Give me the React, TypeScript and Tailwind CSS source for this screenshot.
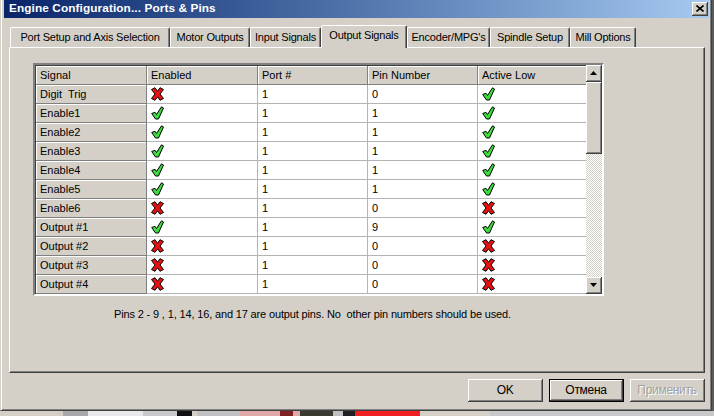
import React from 'react';

type Row = [string, boolean, string, string, boolean];

const rows: Row[] = [
    ['Digit  Trig', false, '1', '0', true],
    ['Enable1', true, '1', '1', true],
    ['Enable2', true, '1', '1', true],
    ['Enable3', true, '1', '1', true],
    ['Enable4', true, '1', '1', true],
    ['Enable5', true, '1', '1', true],
    ['Enable6', false, '1', '0', false],
    ['Output #1', true, '1', '9', true],
    ['Output #2', false, '1', '0', false],
    ['Output #3', false, '1', '0', false],
    ['Output #4', false, '1', '0', false],
];

const tabs = [
    { label: 'Port Setup and Axis Selection', w: 'w-[160px]' },
    { label: 'Motor Outputs', w: 'w-[80px]' },
    { label: 'Input Signals', w: 'w-[71px]' },
    { label: 'Output Signals', w: 'w-[86px]', active: true },
    { label: "Encoder/MPG's", w: 'w-[83px]' },
    { label: 'Spindle Setup', w: 'w-[80px]' },
    { label: 'Mill Options', w: 'w-[66px]' },
];

const RedX = () => (
    <svg width="13" height="14" viewBox="0 0 13 14">
        <polygon
            points="0.5,2.5 4,0.7 6.5,4.2 9,0.7 12.5,2.5 9,7 12.5,11.5 9,13.3 6.5,9.8 4,13.3 0.5,11.5 4,7"
            fill="#e41212"
            stroke="#000"
            strokeWidth="1"
            strokeLinejoin="round"
        />
    </svg>
);

const GreenCheck = () => (
    <svg width="13" height="14" viewBox="0 0 13 14">
        <polygon
            points="0.7,7.5 4,6.3 5.5,8.5 10.5,0.8 12.5,2 7.5,13 4.5,13"
            fill="#3cdc3c"
            stroke="#000"
            strokeWidth="1"
            strokeLinejoin="round"
        />
    </svg>
);

const Mark = ({ on }: { on: boolean }) => (on ? <GreenCheck /> : <RedX />);

const headCell = 'h-[19px] flex items-center pl-1 bg-[#d4d0c8] border-r border-b border-[#808080] shadow-[inset_1px_1px_0_#ffffff]';
const dataCell = 'h-[19px] flex items-center pl-1 bg-white border-r border-b border-[#b4b4b4]';

const Arrow = ({ up }: { up: boolean }) => (
    <div className="w-[16px] h-[17px] bg-[#d4d0c8] border-r border-b border-[#404040] shadow-[inset_1px_1px_0_#ffffff,inset_-1px_-1px_0_#808080] flex items-center justify-center">
        <svg width="7" height="4" viewBox="0 0 7 4">
            <polygon points={up ? '0,4 7,4 3.5,0' : '0,0 7,0 3.5,4'} fill="#000" />
        </svg>
    </div>
);

const Button = ({ label, def, disabled }: { label: string; def?: boolean; disabled?: boolean }) => (
    <div className={`w-[75px] h-[23px] ${def ? 'border border-black' : ''}`}>
        <div className="w-full h-full bg-[#d4d0c8] border-r border-b border-[#404040] shadow-[inset_1px_1px_0_#ffffff,inset_-1px_-1px_0_#808080] flex items-center justify-center text-[12px] tracking-[-0.3px]">
            <span className={disabled ? 'text-[#a0a0a0] [text-shadow:1px_1px_0_#ffffff]' : 'text-black'}>{label}</span>
        </div>
    </div>
);

const App = () => {
    return (
        <div className="w-[714px] h-[416px] overflow-hidden bg-[#5a5a5a] font-['Liberation_Sans',Arial,sans-serif] text-[11px] text-black">
            {/* dialog window */}
            <div className="w-[712px] h-[411px] bg-[#d4d0c8] border-l border-l-[#d4d0c8] border-r border-b border-[#404040] shadow-[inset_1px_0_0_#ffffff,inset_-1px_-1px_0_#808080] px-[2px] flex flex-col">
                {/* title bar */}
                <div className="h-[18px] ml-[1px] bg-gradient-to-r from-[#0a246a] to-[#a6caf0] flex items-center justify-between">
                    <span className="pl-[5px] text-white font-bold text-[11.8px] tracking-[0.1px]">Engine Configuration... Ports &amp; Pins</span>
                    <div className="w-[16px] h-[14px] mr-[1px] bg-[#d4d0c8] border-r border-b border-[#404040] shadow-[inset_1px_1px_0_#ffffff,inset_-1px_-1px_0_#808080] flex items-center justify-center">
                        <svg width="8" height="7" viewBox="0 0 8 7">
                            <path d="M0.5 0.5 L7.5 6.5 M7.5 0.5 L0.5 6.5" stroke="#000" strokeWidth="1.6" />
                        </svg>
                    </div>
                </div>

                {/* tabs */}
                <div className="mt-[7px] h-[22px] ml-[7px] flex items-end relative z-10">
                    {tabs.map((t) => (
                        <div
                            key={t.label}
                            className={`${t.w} ${t.active ? 'h-[23px] -mb-px pb-[3px]' : 'h-[20px]'} bg-[#d4d0c8] border-t border-l border-white border-r border-r-[#404040] rounded-tl-[2px] rounded-tr-[2px] shadow-[inset_-1px_0_0_#808080] flex items-center justify-center whitespace-nowrap text-[11px] tracking-[-0.2px]`}
                        >
                            {t.label}
                        </div>
                    ))}
                </div>

                {/* tab panel */}
                <div className="h-[326px] ml-[6px] mr-[4px] border-t border-l border-white border-r border-b border-r-[#404040] border-b-[#404040] shadow-[inset_-1px_-1px_0_#808080] flex flex-col">
                    {/* grid */}
                    <div className="mt-[15px] ml-[23px] w-[571px] h-[233px] border-2 border-t-[#808080] border-l-[#808080] border-r-white border-b-white flex">
                        <div className="flex-1 overflow-hidden shadow-[inset_1px_1px_0_#404040]">
                            <div className="grid grid-cols-[111px_111px_110px_110px_110px] pt-[1px] pl-[1px]">
                                {['Signal', 'Enabled', 'Port #', 'Pin Number', 'Active Low'].map((h) => (
                                    <div key={h} className={headCell}>
                                        {h}
                                    </div>
                                ))}
                                {rows.map((r) => (
                                    <React.Fragment key={r[0]}>
                                        <div className={`${headCell} whitespace-pre`}>{r[0]}</div>
                                        <div className={dataCell}>
                                            <Mark on={r[1]} />
                                        </div>
                                        <div className={dataCell}>{r[2]}</div>
                                        <div className={dataCell}>{r[3]}</div>
                                        <div className={dataCell}>
                                            <Mark on={r[4]} />
                                        </div>
                                    </React.Fragment>
                                ))}
                                {/* partly scrolled-in row */}
                                <div className={headCell} />
                                <div className={`${dataCell} items-start pt-[1px]`}>
                                    <RedX />
                                </div>
                                <div className={dataCell} />
                                <div className={dataCell} />
                                <div className={`${dataCell} items-start pt-[1px]`}>
                                    <RedX />
                                </div>
                            </div>
                        </div>
                        {/* scrollbar */}
                        <div className="w-[16px] flex flex-col">
                            <Arrow up />
                            <div className="h-[72px] bg-[#d4d0c8] border-r border-b border-[#404040] shadow-[inset_1px_1px_0_#ffffff,inset_-1px_-1px_0_#808080]" />
                            <div className="flex-1 bg-[repeating-conic-gradient(#ffffff_0%_25%,#d4d0c8_0%_50%)] bg-[length:2px_2px]" />
                            <Arrow up={false} />
                        </div>
                    </div>

                    <div className="mt-[10px] pl-[104px] whitespace-pre text-[11px] tracking-[-0.15px]">
                        Pins 2 - 9 , 1, 14, 16, and 17 are output pins. No  other pin numbers should be used.
                    </div>
                </div>

                {/* buttons */}
                <div className="mt-[6px] mr-[4px] flex justify-end gap-[6px]">
                    <Button label="OK" />
                    <Button label="Отмена" def />
                    <Button label="Применить" disabled />
                </div>
            </div>

            {/* background windows peeking below */}
            <div className="h-[5px] flex">
                <div className="w-[63px] bg-[#d4d0c8]" />
                <div className="w-[25px] bg-[#a8a8a8]" />
                <div className="w-[55px] bg-[#e8e8e8]" />
                <div className="w-[34px] bg-[#c8c8c8]" />
                <div className="w-[15px] bg-[#101010]" />
                <div className="w-[5px] bg-[#d4d0c8]" />
                <div className="w-[43px] bg-[#c0c0c0]" />
                <div className="w-[40px] bg-[#e0a8a8]" />
                <div className="w-[13px] bg-[#802020]" />
                <div className="w-[7px] bg-[#e0a8a8]" />
                <div className="w-[33px] bg-[#3a3a30]" />
                <div className="w-[10px] bg-[#c0c0c0]" />
                <div className="w-[12px] bg-[#202020]" />
                <div className="w-[65px] bg-[#f02020]" />
                <div className="w-[70px] bg-[#d4d0c8]" />
                <div className="flex-1 bg-[#c8c8c8]" />
            </div>
        </div>
    );
};

export default App;
